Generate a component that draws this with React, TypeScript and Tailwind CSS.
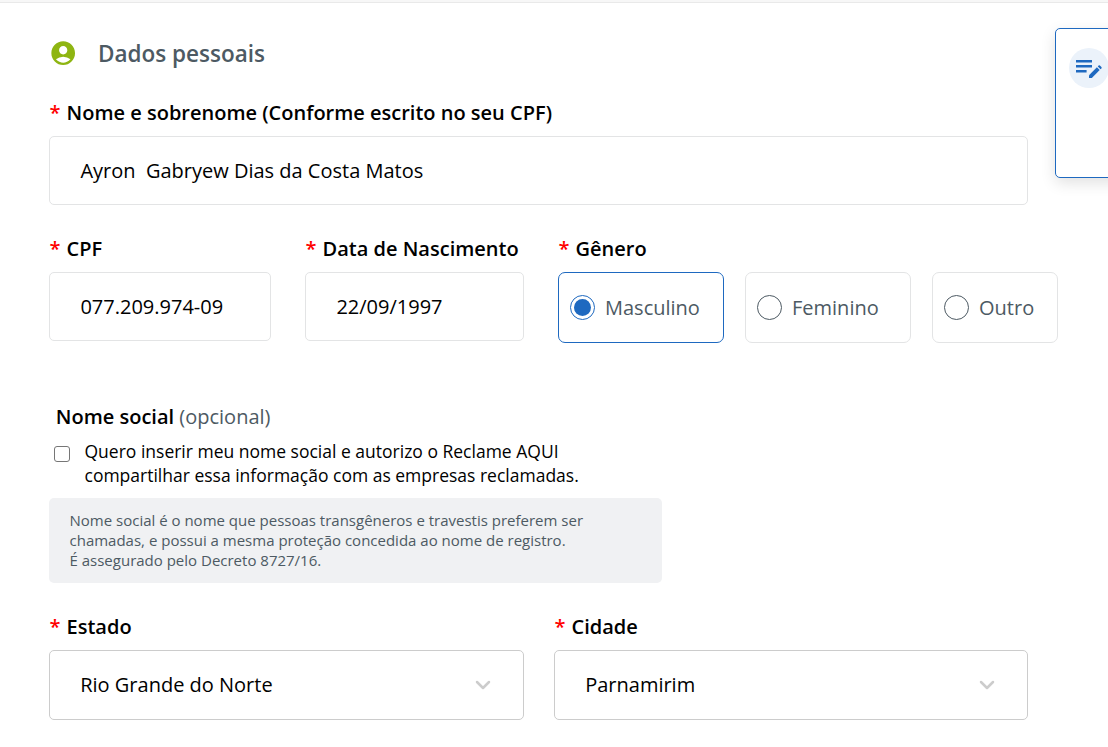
import type { ReactNode } from "react";
import { useState } from "react";
import { MdAccountCircle } from "react-icons/md";

function Label({ children }: { children: ReactNode }) {
  return (
    <div className="flex h-[27px] items-center gap-[6px] whitespace-nowrap pl-[0.6px] text-[20px] font-semibold leading-[27px] text-black">
      <span className="text-[#ff0000]">*</span>
      <span>{children}</span>
    </div>
  );
}

function TextField({ label, value, width }: { label: string; value: string; width: string }) {
  return (
    <div className={`shrink-0 ${width}`}>
      <Label>{label}</Label>
      <div className="mt-[10px] flex h-[69px] items-center whitespace-pre rounded-[5px] border border-[#e3e4e5] pl-[30.4px] text-[20px] text-black">
        {value}
      </div>
    </div>
  );
}

function SelectField({ label, value, width }: { label: string; value: string; width: string }) {
  return (
    <div className={`shrink-0 ${width}`}>
      <Label>{label}</Label>
      <div className="mt-[10px] flex h-[70px] items-center justify-between rounded-[5px] border border-[#cccccc] pl-[30.2px] pr-[32px] text-[20px] text-black">
        <span>{value}</span>
        <svg width="16" height="10" viewBox="0 0 16 10" fill="none" stroke="#cccccc" strokeWidth="2.5" strokeLinecap="round" strokeLinejoin="round">
          <path d="M2 2l6 6 6-6" />
        </svg>
      </div>
    </div>
  );
}

function RadioCard({ label, width, selected, onSelect }: { label: string; width: string; selected: boolean; onSelect: () => void }) {
  return (
    <button
      type="button"
      role="radio"
      aria-checked={selected}
      onClick={onSelect}
      className={`flex h-[71px] shrink-0 items-center rounded-[7px] border pl-[11px] text-[20px] text-[#4d5a63] ${width} ${selected ? "border-[#1e69c0]" : "border-[#e3e4e5]"}`}
    >
      <span className={`flex size-[25px] items-center justify-center rounded-full border ${selected ? "border-[#1e69c0]" : "border-[#4d5a63]"}`}>
        {selected && <span className="size-[17px] rounded-full bg-[#1e69c0]" />}
      </span>
      <span className="ml-[10px] leading-[27px]">{label}</span>
    </button>
  );
}

function EditNoteIcon() {
  return (
    <svg width="28" height="20" viewBox="0 0 28 20" fill="#1e69c0" aria-hidden="true">
      <path d="M1 1h16v2.6H1zM1 6h16v2.6H1zM1 11h10.6v2.6H1z" />
      <path d="M14 16.2l7.9-7.9 2.8 2.8-7.9 7.9H14z" />
      <path d="M22.8 7.4l.8-.8a.9.9 0 0 1 1.3 0l1.5 1.5a.9.9 0 0 1 0 1.3l-.8.8z" />
    </svg>
  );
}

export default function App() {
  const [gender, setGender] = useState("Masculino");
  return (
    <div className="h-[747px] w-full overflow-hidden bg-white font-['Open_Sans',sans-serif]">
      <div className="h-[3px] border-b border-[#e9e9e9] bg-[#f7f7f7]" />
      <div className="flex">
        <main className="w-[1055px] shrink-0 pl-[49px]">
          <h2 className="mt-[34px] flex h-[32px] items-center text-[#4d5a63]">
            <MdAccountCircle className="size-[28.4px] text-[#8eb512]" />
            <span className="ml-[20.6px] pt-[2px] text-[22.5px] font-semibold">Dados pessoais</span>
          </h2>

          <div className="mt-[30px]">
            <TextField label="Nome e sobrenome (Conforme escrito no seu CPF)" value="Ayron  Gabryew Dias da Costa Matos" width="w-[979px]" />
          </div>

          <div className="mt-[30px] flex">
            <TextField label="CPF" value="077.209.974-09" width="w-[222px]" />
            <div className="ml-[34px] shrink-0">
              <TextField label="Data de Nascimento" value="22/09/1997" width="w-[219px]" />
            </div>
            <div className="ml-[34px] shrink-0">
              <Label>Gênero</Label>
              <div role="radiogroup" aria-label="Gênero" className="mt-[10px] flex gap-[21px]">
                <RadioCard label="Masculino" width="w-[166px]" selected={gender === "Masculino"} onSelect={() => setGender("Masculino")} />
                <RadioCard label="Feminino" width="w-[166px]" selected={gender === "Feminino"} onSelect={() => setGender("Feminino")} />
                <RadioCard label="Outro" width="w-[126px]" selected={gender === "Outro"} onSelect={() => setGender("Outro")} />
              </div>
            </div>
          </div>

          <div className="mt-[60px] pl-[6.8px] text-[20px] leading-[27px]">
            <span className="font-semibold text-black">Nome social</span> <span className="text-[#4d5a63]">(opcional)</span>
          </div>
          <label className="mt-[9px] flex items-start pl-[5px] text-[17.5px] leading-[24px] text-black">
            <input type="checkbox" className="mt-[7px] size-[16px] shrink-0 appearance-none rounded-[3px] border border-[#767676] bg-white checked:bg-[#1e69c0]" />
            <span className="ml-[14.5px]">
              Quero inserir meu nome social e autorizo o Reclame AQUI
              <br />
              compartilhar essa informação com as empresas reclamadas.
            </span>
          </label>
          <p className="mt-[11px] h-[85px] w-[613px] rounded-[5px] bg-[#f0f1f3] pl-[20.5px] pt-[12px] text-[15px] leading-[20px] text-[#4d5a63]">
            Nome social é o nome que pessoas transgêneros e travestis preferem ser
            <br />
            chamadas, e possui a mesma proteção concedida ao nome de registro.
            <br />É assegurado pelo Decreto 8727/16.
          </p>

          <div className="mt-[30px] flex gap-[30px]">
            <SelectField label="Estado" value="Rio Grande do Norte" width="w-[475px]" />
            <SelectField label="Cidade" value="Parnamirim" width="w-[474px]" />
          </div>
        </main>

        <aside className="mt-[25px] h-[150px] w-[340px] shrink-0 rounded-[5px] border border-[#1e69c0] bg-white pl-[13px] pt-[19px] shadow-[0_5px_15px_rgba(0,0,0,0.12)]">
          <div className="flex size-[40px] items-center justify-center rounded-full bg-[#ebf2fa] pt-[2px]">
            <EditNoteIcon />
          </div>
        </aside>
      </div>
    </div>
  );
}
